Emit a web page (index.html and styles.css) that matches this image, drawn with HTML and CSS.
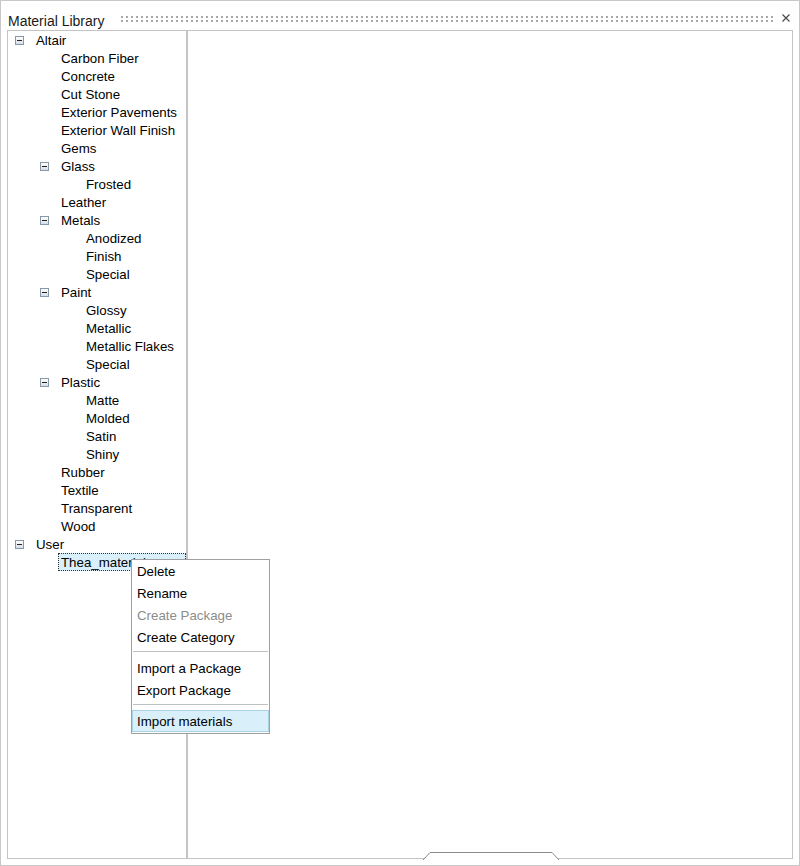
FILE: index.html
```html
<!DOCTYPE html>
<html>
<head>
<meta charset="utf-8">
<link rel="stylesheet" href="styles.css">
</head>
<body>
<div class="window">
  <div class="titlebar">
    <div class="title">Material Library</div>
    <div class="grip"></div>
    <svg class="close" width="8" height="8" viewBox="0 0 8 8"><path d="M0.5 0.5 L7.5 7.5 M7.5 0.5 L0.5 7.5" stroke="#4a4a4a" stroke-width="1.2" fill="none"/></svg>
  </div>
  <div class="body">
    <div class="tree">
      <div class="row l0"><span class="exp"></span><span class="label">Altair</span></div>
      <div class="row l1"><span class="exp none"></span><span class="label">Carbon Fiber</span></div>
      <div class="row l1"><span class="exp none"></span><span class="label">Concrete</span></div>
      <div class="row l1"><span class="exp none"></span><span class="label">Cut Stone</span></div>
      <div class="row l1"><span class="exp none"></span><span class="label">Exterior Pavements</span></div>
      <div class="row l1"><span class="exp none"></span><span class="label">Exterior Wall Finish</span></div>
      <div class="row l1"><span class="exp none"></span><span class="label">Gems</span></div>
      <div class="row l1"><span class="exp"></span><span class="label">Glass</span></div>
      <div class="row l2"><span class="exp none"></span><span class="label">Frosted</span></div>
      <div class="row l1"><span class="exp none"></span><span class="label">Leather</span></div>
      <div class="row l1"><span class="exp"></span><span class="label">Metals</span></div>
      <div class="row l2"><span class="exp none"></span><span class="label">Anodized</span></div>
      <div class="row l2"><span class="exp none"></span><span class="label">Finish</span></div>
      <div class="row l2"><span class="exp none"></span><span class="label">Special</span></div>
      <div class="row l1"><span class="exp"></span><span class="label">Paint</span></div>
      <div class="row l2"><span class="exp none"></span><span class="label">Glossy</span></div>
      <div class="row l2"><span class="exp none"></span><span class="label">Metallic</span></div>
      <div class="row l2"><span class="exp none"></span><span class="label">Metallic Flakes</span></div>
      <div class="row l2"><span class="exp none"></span><span class="label">Special</span></div>
      <div class="row l1"><span class="exp"></span><span class="label">Plastic</span></div>
      <div class="row l2"><span class="exp none"></span><span class="label">Matte</span></div>
      <div class="row l2"><span class="exp none"></span><span class="label">Molded</span></div>
      <div class="row l2"><span class="exp none"></span><span class="label">Satin</span></div>
      <div class="row l2"><span class="exp none"></span><span class="label">Shiny</span></div>
      <div class="row l1"><span class="exp none"></span><span class="label">Rubber</span></div>
      <div class="row l1"><span class="exp none"></span><span class="label">Textile</span></div>
      <div class="row l1"><span class="exp none"></span><span class="label">Transparent</span></div>
      <div class="row l1"><span class="exp none"></span><span class="label">Wood</span></div>
      <div class="row l0"><span class="exp"></span><span class="label">User</span></div>
      <div class="row l1 sel"><span class="exp none"></span><span class="label">Thea_materials</span></div>
    </div>
    <div class="view"></div>
  </div>
  <svg class="handle" width="142" height="11" viewBox="0 0 142 11">
    <rect x="3" y="9" width="137" height="1" fill="#ffffff"/>
    <path d="M3 10 L10 2.5 L132 2.5 L139 10" stroke="#8a8a8a" stroke-width="1" fill="#ffffff"/>
  </svg>
  <div class="menu">
    <div class="item">Delete</div>
    <div class="item">Rename</div>
    <div class="item disabled">Create Package</div>
    <div class="item">Create Category</div>
    <div class="sep"></div>
    <div class="item">Import a Package</div>
    <div class="item">Export Package</div>
    <div class="sep"></div>
    <div class="item hover">Import materials</div>
  </div>
</div>
</body>
</html>
```
FILE: styles.css
```css
html, body {
  margin: 0;
  padding: 0;
  background: #ffffff;
}

.window {
  position: relative;
  width: 800px;
  height: 866px;
  box-sizing: border-box;
  border: 1px solid #c8c8c8;
  background: #ffffff;
  font-family: "Liberation Sans", Arial, sans-serif;
  color: #000000;
  overflow: hidden;
}

.titlebar {
  display: flex;
  align-items: flex-start;
  height: 29px;
  padding-left: 7px;
}

.title {
  padding-top: 11px;
  line-height: 18px;
  font-size: 14px;
  color: #1a1a1a;
  white-space: nowrap;
}

.grip {
  flex: 1;
  margin-left: 14px;
  margin-top: 15px;
  height: 6px;
  background:
    linear-gradient(90deg, #ffffff 3px, transparent 3px) 0 0 / 5px 4px,
    linear-gradient(#a8a8a8 2px, transparent 2px) 0 0 / 5px 4px;
}

.close {
  display: block;
  margin: 13px 9px 0 9px;
}

.body {
  display: flex;
  margin-left: 6px;
  width: 786px;
  height: 829px;
}

.tree {
  width: 180px;
  box-sizing: border-box;
  border: 1px solid #c4c4c4;
  font-size: 13.3px;
  overflow: hidden;
}

.view {
  flex: 1;
  border: 1px solid #c4c4c4;
}

.row {
  display: flex;
  align-items: flex-start;
  height: 18px;
  white-space: nowrap;
}

.label {
  padding-top: 2px;
  line-height: 16px;
}

.l0 { padding-left: 7px; }
.l1 { padding-left: 32px; }
.l2 { padding-left: 57px; }

.exp {
  position: relative;
  flex: none;
  width: 9px;
  height: 9px;
  box-sizing: border-box;
  margin-top: 5px;
  margin-right: 12px;
  border: 1px solid #8797a8;
  background: linear-gradient(#ffffff, #d6dee7);
}

.exp::after {
  content: "";
  position: absolute;
  left: 1px;
  top: 3px;
  width: 5px;
  height: 1px;
  background: #222222;
}

.exp.none {
  visibility: hidden;
}

.sel .label {
  flex: 1;
  height: 18px;
  box-sizing: border-box;
  line-height: 16px;
  padding-top: 1px;
  margin-left: -3px;
  padding-left: 2px;
  border: 1px dotted #333333;
  background: #d9f0fb;
  overflow: visible;
}

.handle {
  position: absolute;
  left: 419px;
  top: 849px;
  display: block;
}

.menu {
  position: absolute;
  left: 130px;
  top: 558px;
  width: 139px;
  height: 175px;
  box-sizing: border-box;
  border: 1px solid #a0a0a0;
  background: #ffffff;
  font-size: 13.3px;
}

.item {
  height: 22px;
  box-sizing: border-box;
  padding-top: 1px;
  line-height: 22px;
  padding-left: 5px;
  white-space: nowrap;
  color: #000000;
}

.item.disabled {
  color: #8c8c8c;
}

.item.hover {
  padding-top: 0;
  line-height: 21px;
  padding-left: 4px;
  border: 1px solid #a9d2e4;
  background: #d9f0fb;
}

.sep {
  height: 9px;
  box-sizing: border-box;
  margin: 0 1px 0 1px;
  padding-top: 3px;
}

.sep::before {
  content: "";
  display: block;
  height: 1px;
  background: #c0c0c0;
}
```
